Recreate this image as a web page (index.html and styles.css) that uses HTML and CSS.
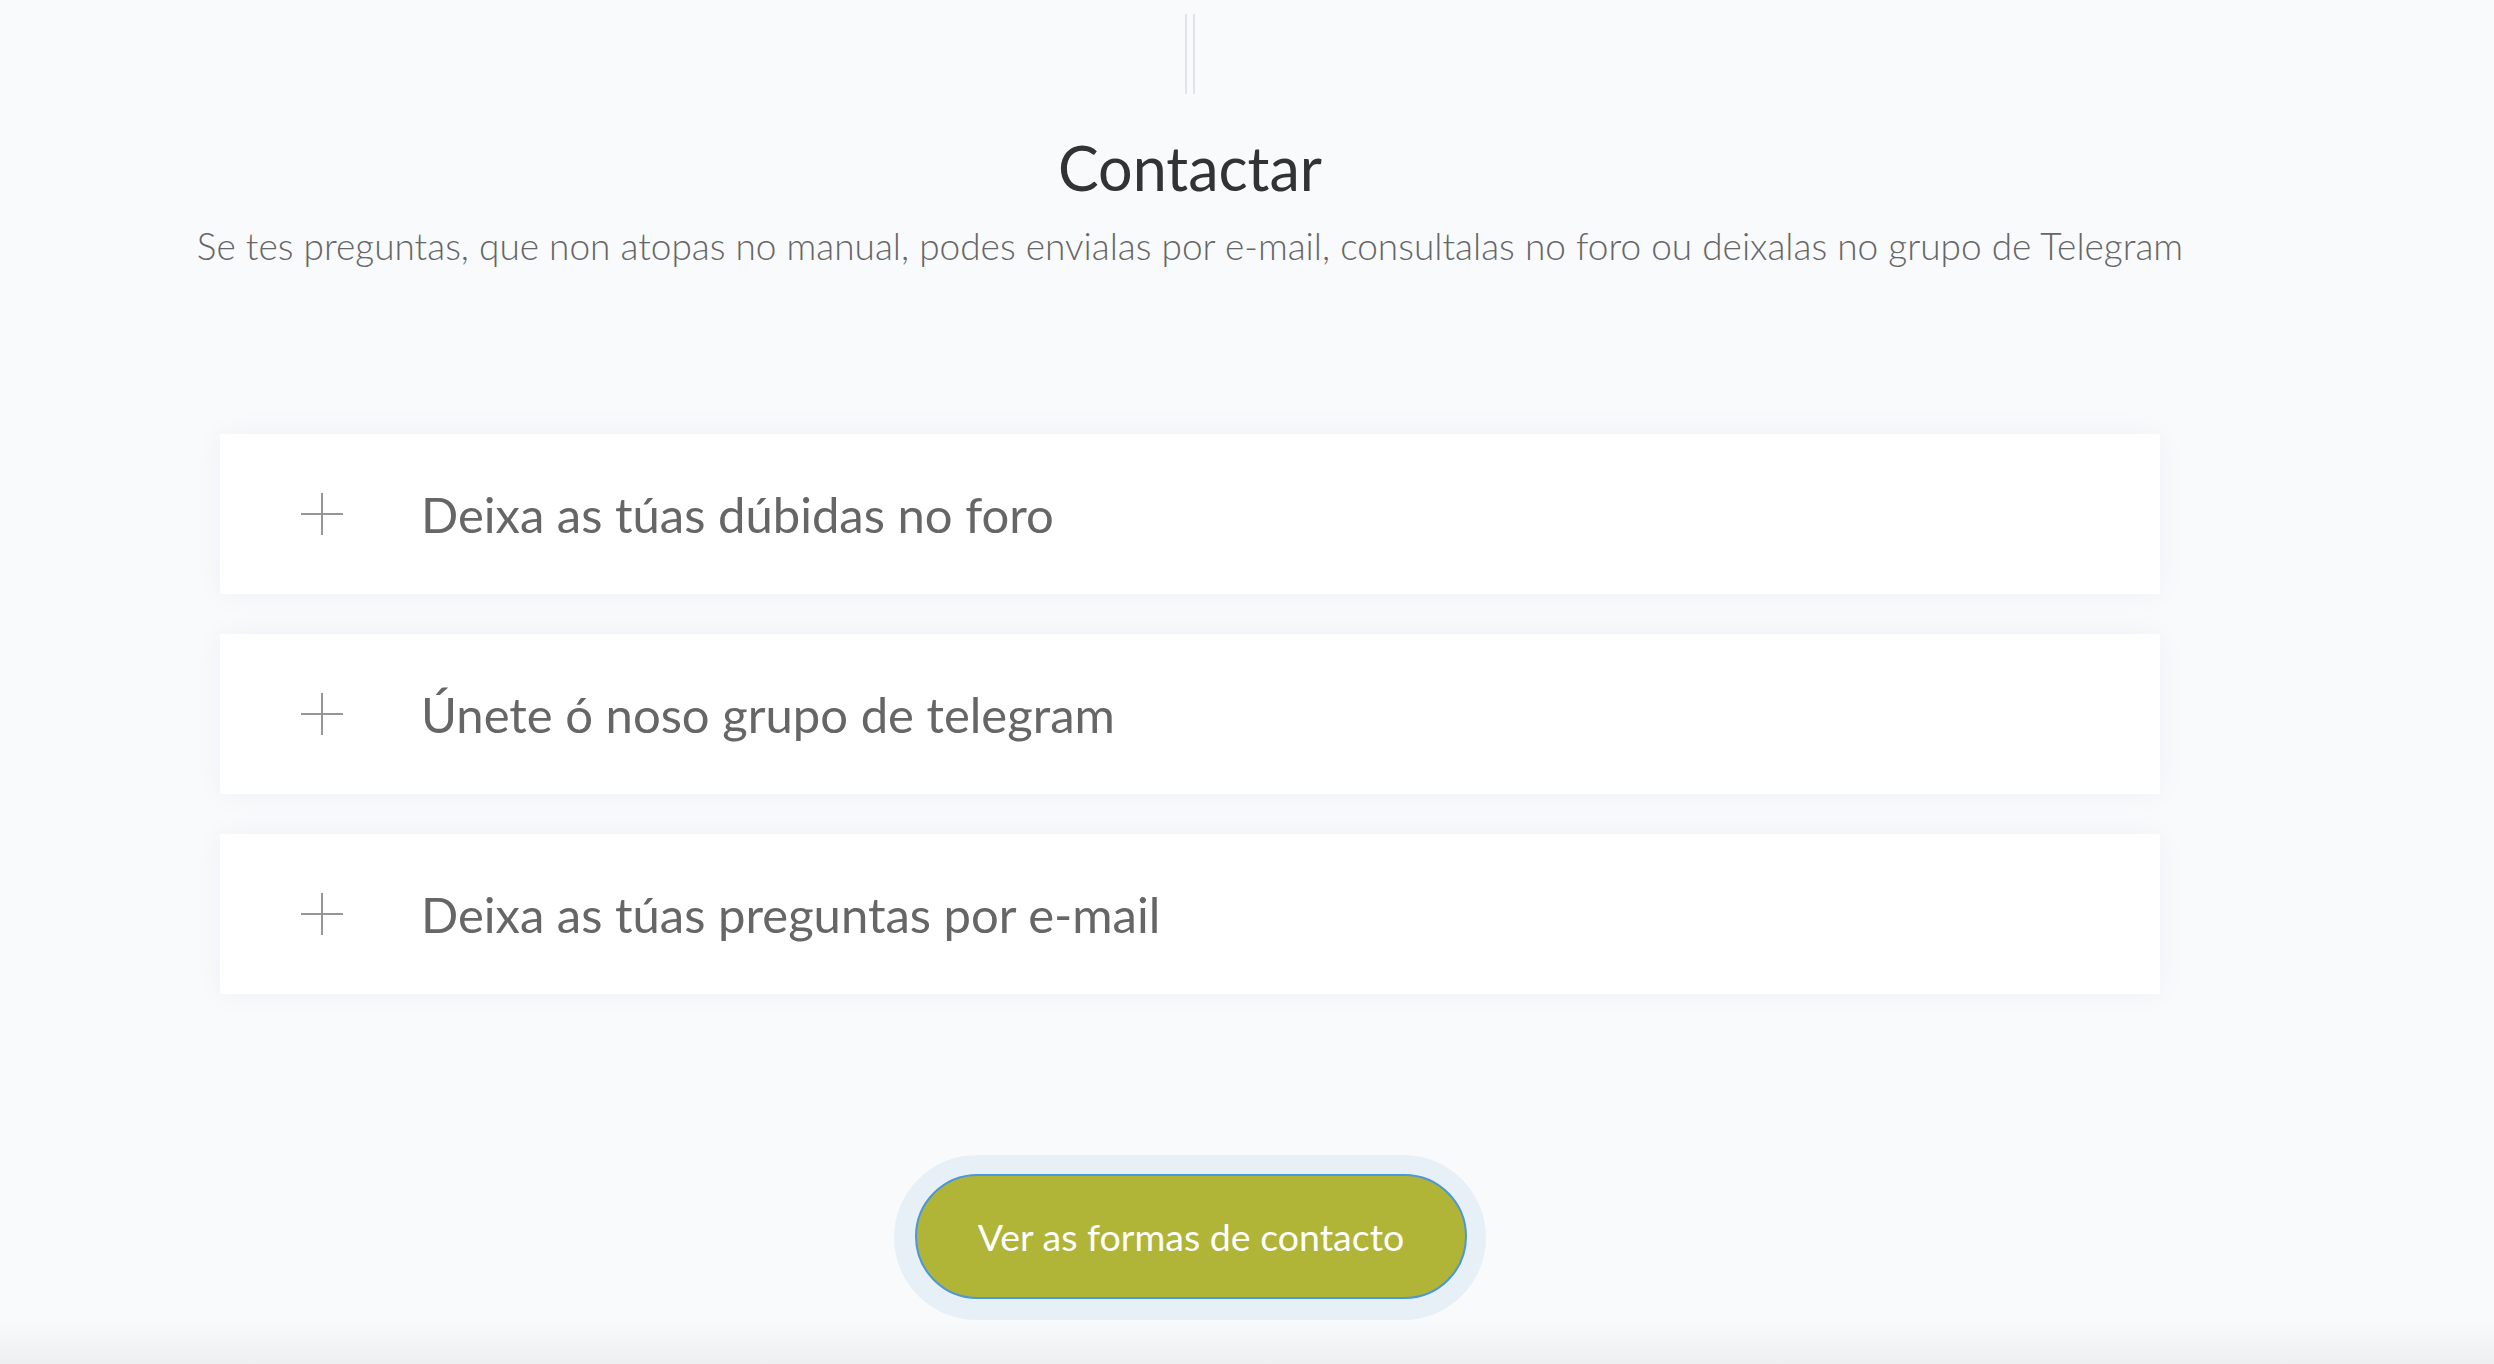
FILE: index.html
```html
<!DOCTYPE html>
<html lang="gl">
<head>
<meta charset="utf-8">
<title>Contactar</title>
<link rel="stylesheet" href="styles.css">
</head>
<body>
<main class="page">
  <div class="divider"><span></span><span></span></div>
  <h1 class="title">Contactar</h1>
  <p class="subtitle">Se tes preguntas, que non atopas no manual, podes envialas por e-mail, consultalas no foro ou deixalas no grupo de Telegram</p>
  <ul class="accordion">
    <li class="item"><span class="plus"></span><span class="label">Deixa as túas dúbidas no foro</span></li>
    <li class="item"><span class="plus"></span><span class="label">Únete ó noso grupo de telegram</span></li>
    <li class="item"><span class="plus"></span><span class="label">Deixa as túas preguntas por e-mail</span></li>
  </ul>
  <div class="cta-wrap">
    <a class="cta" href="#">Ver as formas de contacto</a>
  </div>
</main>
<div class="fold"></div>
</body>
</html>
```
FILE: styles.css
```css
html, body {
  margin: 0;
  padding: 0;
  height: 100%;
  overflow: hidden;
}
body {
  background: #f9fafc;
  font-family: Lato, "Open Sans", sans-serif;
  position: relative;
}
.page {
  width: 2380px;
  display: flex;
  flex-direction: column;
  align-items: center;
}
.divider {
  margin-top: 14px;
  height: 80px;
  display: flex;
  gap: 6px;
}
.divider span {
  width: 2px;
  height: 100%;
  background: #e3e4e8;
}
.title {
  margin: 38px 0 0;
  font-size: 61px;
  line-height: 72px;
  font-weight: 400;
  color: #333333;
}
.subtitle {
  margin: 20px 0 0;
  font-size: 37px;
  line-height: 44px;
  font-weight: 300;
  color: #666666;
}
.accordion {
  list-style: none;
  margin: 166px 0 0;
  padding: 0;
  width: 1940px;
  display: flex;
  flex-direction: column;
  gap: 40px;
}
.item {
  height: 160px;
  background: #ffffff;
  box-shadow: 0 0 28px rgba(20, 30, 60, 0.045);
  display: flex;
  align-items: center;
  padding-left: 81px;
}
.plus {
  position: relative;
  width: 42px;
  height: 42px;
  flex: none;
}
.plus::before, .plus::after {
  content: "";
  position: absolute;
  background: #969696;
}
.plus::before {
  left: 0;
  right: 0;
  top: 20px;
  height: 2px;
}
.plus::after {
  top: 0;
  bottom: 0;
  left: 20px;
  width: 2px;
}
.label {
  margin-left: 78px;
  font-size: 49px;
  line-height: 58px;
  color: #666666;
  font-weight: 400;
}
.cta-wrap {
  margin-top: 161px;
  padding: 19px 19px 21px 21px;
  background: #e8f0f7;
  border-radius: 84px;
}
.cta {
  display: flex;
  align-items: center;
  justify-content: center;
  width: 548px;
  height: 121px;
  box-sizing: content-box;
  border: 2px solid #4a97d9;
  border-radius: 64px;
  background: #b0b437;
  color: #ffffff;
  text-decoration: none;
  font-size: 37.5px;
  font-weight: 400;
}
.fold {
  position: absolute;
  left: 0;
  right: 0;
  bottom: 0;
  height: 44px;
  background: linear-gradient(to bottom, rgba(238, 239, 241, 0), #eeeff1);
}
```
